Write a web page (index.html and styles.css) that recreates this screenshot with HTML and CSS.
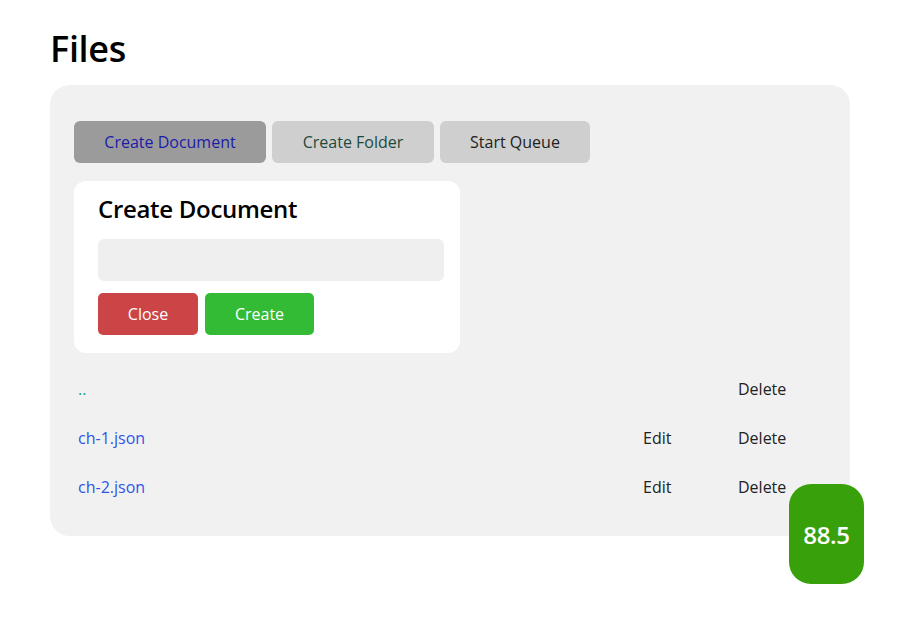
FILE: index.html
```html
<!DOCTYPE html>
<html>
<head>
<meta charset="utf-8">
<link rel="stylesheet" href="styles.css">
</head>
<body>
<div class="page">
  <h1 class="title">Files</h1>
  <div class="panel">
    <div class="toolbar">
      <button class="tool tool-active">Create Document</button>
      <button class="tool tool-folder">Create Folder</button>
      <button class="tool tool-queue">Start Queue</button>
    </div>
    <div class="card">
      <h2 class="card-title">Create Document</h2>
      <div class="input"></div>
      <div class="actions">
        <button class="btn btn-close">Close</button>
        <button class="btn btn-create">Create</button>
      </div>
    </div>
    <div class="list">
      <div class="row">
        <span class="cell name up">..</span>
        <span class="cell"></span>
        <span class="cell">Delete</span>
      </div>
      <div class="row">
        <span class="cell name">ch-1.json</span>
        <span class="cell">Edit</span>
        <span class="cell">Delete</span>
      </div>
      <div class="row">
        <span class="cell name">ch-2.json</span>
        <span class="cell">Edit</span>
        <span class="cell">Delete</span>
      </div>
    </div>
  </div>
</div>
<div class="score">88.5</div>
</body>
</html>
```
FILE: styles.css
```css
* { box-sizing: border-box; }
body {
  margin: 0;
  font-family: "Open Sans", "Noto Sans", sans-serif;
  color: #222;
  background: #fff;
}
.page {
  width: 800px;
  margin: 0 auto;
}
.title {
  margin: 24px 0 12px;
  font-size: 36px;
  font-weight: 600;
  line-height: 49px;
  color: #000;
  letter-spacing: -0.3px;
}
.panel {
  background: #f1f1f1;
  border-radius: 20px;
  padding: 36px 24px 23px;
  height: 451px;
}
.toolbar {
  display: flex;
  gap: 6px;
}
.tool {
  height: 42px;
  padding: 0 30px;
  border: none;
  border-radius: 6px;
  font-family: inherit;
  font-size: 16px;
  background: #cfcfcf;
  color: #222;
}
.tool-active { background: #9b9b9b; color: #1c1ca8; width: 192px; }
.tool-folder { color: #1d4a3c; width: 162px; }
.tool-queue { width: 150px; }
.card {
  margin-top: 18px;
  width: 386px;
  background: #fff;
  border-radius: 12px;
  padding: 11px 16px 18px 24px;
}
.card-title {
  margin: 0;
  font-size: 24px;
  font-weight: 600;
  line-height: 34px;
  color: #000;
  letter-spacing: -0.3px;
}
.input {
  margin-top: 13px;
  height: 42px;
  background: #efefef;
  border-radius: 6px;
}
.actions {
  margin-top: 12px;
  display: flex;
  gap: 7px;
}
.btn {
  height: 42px;
  padding: 0;
  border: none;
  border-radius: 5px;
  font-family: inherit;
  font-size: 16px;
  color: #fff;
}
.btn-close { background: #cc4546; width: 100px; }
.btn-create { background: #33bb35; width: 109px; }
.list {
  margin-top: 11px;
}
.row {
  display: grid;
  grid-template-columns: 1fr 95px 92px;
  height: 49px;
  align-items: center;
  font-size: 16px;
}
.cell { padding-left: 4px; }
.name { color: #2f55e8; }
.up { color: #1fa37a; }
.score {
  position: absolute;
  left: 789px;
  top: 484px;
  width: 75px;
  height: 100px;
  border-radius: 22px;
  background: #38a00a;
  color: #fff;
  font-family: "Open Sans", sans-serif;
  font-size: 24px;
  font-weight: 600;
  display: flex;
  align-items: center;
  justify-content: center;
  letter-spacing: -0.3px;
}
```
